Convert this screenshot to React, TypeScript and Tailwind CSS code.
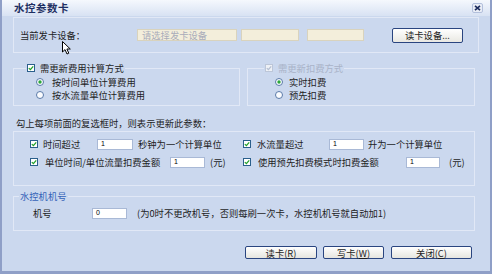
import React from 'react';

const FONT = { fontFamily: '"Noto Sans CJK SC", "Liberation Sans", sans-serif' };

const Check = ({ disabled = false }: { disabled?: boolean }) => (
  <svg width="8" height="8" viewBox="0 0 8 8" className="shrink-0">
    <rect x="0.5" y="0.5" width="7" height="7" fill={disabled ? '#eef1f6' : '#ffffff'} stroke={disabled ? '#bcc6d8' : '#2a5f8c'} />
    <path d="M1.8 4.1 L3.4 5.6 L6.2 2.4" fill="none" stroke={disabled ? '#b4bfd2' : '#22a02a'} strokeWidth="1.3" />
  </svg>
);

const Radio = ({ on = false }: { on?: boolean }) => (
  <svg width="8" height="8" viewBox="0 0 8 8" className="shrink-0">
    <circle cx="4" cy="4" r="3.5" fill="#fbfcfe" stroke="#5a7aa8" />
    {on && <circle cx="4" cy="4" r="1.7" fill="#2aa63a" />}
  </svg>
);

const NumBox = ({ value, w }: { value: string; w: string }) => (
  <div className={`${w} h-[11px] shrink-0 bg-white border border-[#a9b9d6] flex items-center pl-[3px] text-[7px] text-black`} style={{ fontFamily: '"Liberation Sans", sans-serif' }}>
    {value}
  </div>
);

export default function App() {
  return (
    <div className="relative w-[492px] h-[274px] bg-[#cbd8ee] border-l-2 border-r-2 border-b-[3px] border-[#8f9fc7] flex flex-col overflow-hidden text-[9.3px] text-[#1e1e1e] leading-[12px]" style={FONT}>
      {/* title bar */}
      <div className="h-[16px] shrink-0 flex items-center justify-between bg-gradient-to-b from-[#f5f8fd] to-[#d8e2f3] pl-[12px] pr-[7px]">
        <span className="text-[10.5px] font-bold text-[#1e2f63] tracking-[0.5px]">水控参数卡</span>
        <div className="w-[11px] h-[10px] rounded-[2px] bg-[#e9edf6] border border-[#b3c0dc] flex items-center justify-center">
          <svg width="7" height="6" viewBox="0 0 7 6">
            <path d="M1 0.8 L6 5.2 M6 0.8 L1 5.2" stroke="#1c2b5c" strokeWidth="1.6" />
          </svg>
        </div>
      </div>

      <div className="flex flex-col pl-[11px]">
        {/* card device */}
        <div className="mt-[1px] w-[466px] h-[36px] border border-[#e1e8f6] flex items-center">
          <span className="w-[123px] pl-[6px] shrink-0">当前发卡设备：</span>
          <div className="w-[100px] h-[12px] bg-[#f3eedb] border border-[#d9d3bd] pl-[4px] flex items-center text-[#a9acba]">请选择发卡设备</div>
          <div className="ml-[4px] w-[58px] h-[12px] bg-[#f3eedb] border border-[#d9d3bd]" />
          <div className="ml-[8px] w-[57px] h-[12px] bg-[#f3eedb] border border-[#d9d3bd]" />
          <button className="ml-[28px] w-[71px] h-[15px] rounded-[2px] border border-[#2a4580] bg-gradient-to-b from-white to-[#e9e8e2] flex items-center justify-center text-[#1e1e1e]">
            读卡设备...
          </button>
        </div>

        {/* calc mode / deduct mode */}
        <div className="mt-[9px] flex gap-[7px]">
          <fieldset className="w-[227px] h-[44px] border border-[#e1e8f6]">
            <legend className="ml-[12px] px-[1px] flex items-center gap-[5px] h-[12px]">
              <Check />
              <span>需更新费用计算方式</span>
            </legend>
            <div className="pl-[22px] pt-[2px]">
              <div className="flex items-center gap-[8px] h-[12px]"><Radio on /><span>按时间单位计算费用</span></div>
              <div className="mt-[1px] flex items-center gap-[8px] h-[12px]"><Radio /><span>按水流量单位计算费用</span></div>
            </div>
          </fieldset>
          <fieldset className="w-[228px] h-[44px] border border-[#e1e8f6]">
            <legend className="ml-[16px] px-[1px] flex items-center gap-[5px] h-[12px]">
              <Check disabled />
              <span className="text-[#a9b3c8]">需更新扣费方式</span>
            </legend>
            <div className="pl-[27px] pt-[2px]">
              <div className="flex items-center gap-[6px] h-[12px]"><Radio on /><span>实时扣费</span></div>
              <div className="mt-[1px] flex items-center gap-[6px] h-[12px]"><Radio /><span>预先扣费</span></div>
            </div>
          </fieldset>
        </div>

        <div className="mt-[11px] pl-[3px] h-[12px]">勾上每项前面的复选框时，则表示更新此参数：</div>

        {/* parameters */}
        <div className="mt-[2px] w-[462px] h-[55px] border border-[#e1e8f6] pt-[6px] pl-[16px] flex flex-col gap-[6px]">
          <div className="flex items-center h-[12px]">
            <div className="w-[213px] flex items-center">
              <Check />
              <span className="ml-[5px] w-[54px]">时间超过</span>
              <NumBox value="1" w="w-[36px]" />
              <span className="ml-[5px]">秒钟为一个计算单位</span>
            </div>
            <Check />
            <span className="ml-[6px] w-[72px]">水流量超过</span>
            <NumBox value="1" w="w-[35px]" />
            <span className="ml-[4px]">升为一个计算单位</span>
          </div>
          <div className="flex items-center h-[12px]">
            <div className="w-[213px] flex items-center">
              <Check />
              <span className="ml-[7px] w-[125px]">单位时间/单位流量扣费金额</span>
              <NumBox value="1" w="w-[35px]" />
              <span className="ml-[5px]">(元)</span>
            </div>
            <Check />
            <span className="ml-[7px] w-[148px]">使用预先扣费模式时扣费金额</span>
            <NumBox value="1" w="w-[34px]" />
            <span className="ml-[9px]">(元)</span>
          </div>
        </div>

        {/* machine number */}
        <fieldset className="mt-[4px] w-[462px] h-[41px] border border-[#e1e8f6]">
          <legend className="ml-[5px] px-[1px] h-[12px] text-[#3563b8]">水控机机号</legend>
          <div className="pl-[19px] pt-[5px] flex items-center h-[17px]">
            <span className="w-[59px]">机号</span>
            <NumBox value="0" w="w-[35px]" />
            <span className="ml-[10px]">(为0时不更改机号，否则每刷一次卡，水控机机号就自动加1)</span>
          </div>
        </fieldset>
      </div>

      {/* buttons */}
      <div className="mt-[15px] pl-[243px] flex">
        <button className="w-[72px] h-[13px] rounded-[2px] border border-[#2a4580] bg-gradient-to-b from-white to-[#e6e5df] flex items-center justify-center">
          读卡(<span className="underline">R</span>)
        </button>
        <button className="ml-[6px] w-[61px] h-[13px] rounded-[2px] border border-[#2a4580] bg-gradient-to-b from-white to-[#e6e5df] flex items-center justify-center">
          写卡(<span className="underline">W</span>)
        </button>
        <button className="ml-[7px] w-[81px] h-[13px] rounded-[2px] border border-[#2a4580] bg-gradient-to-b from-white to-[#e6e5df] flex items-center justify-center">
          关闭(<span className="underline">C</span>)
        </button>
      </div>

      {/* mouse cursor */}
      <svg className="absolute left-[60px] top-[41px]" width="10" height="14" viewBox="0 0 10 14">
        <path d="M0.5 0.5 L0.5 11 L3 8.6 L5 13 L6.8 12.2 L4.9 8 L8.3 8 Z" fill="#ffffff" stroke="#000000" strokeWidth="1" strokeLinejoin="round" />
      </svg>
    </div>
  );
}
